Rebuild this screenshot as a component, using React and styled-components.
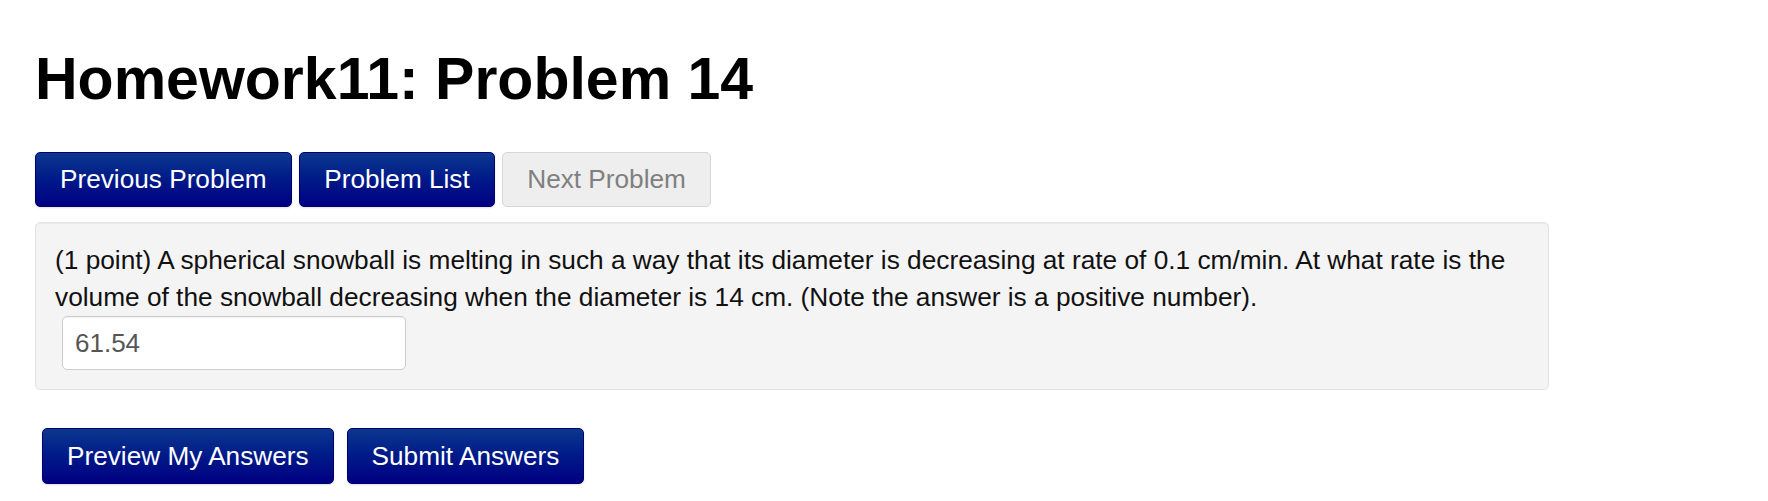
import React from 'react'
import styled, { createGlobalStyle } from 'styled-components'

const GlobalStyle = createGlobalStyle`
  html, body {
    margin: 0;
    padding: 0;
    background: #fff;
  }
  body {
    font-family: "Liberation Sans", Arial, sans-serif;
    color: #000;
  }
`

const Page = styled.div`
  padding: 47px 35px 16px 35px;
`

const Title = styled.h1`
  margin: 0;
  font-size: 59px;
  line-height: 64px;
  font-weight: bold;
  color: #000;
`

const NavRow = styled.div`
  display: flex;
  gap: 7.5px;
  margin-top: 41px;
`

const Button = styled.button`
  box-sizing: border-box;
  height: ${(p) => (p.$tall ? '56px' : '55px')};
  padding: 0 24px;
  font-family: "Liberation Sans", Arial, sans-serif;
  font-size: 26.2px;
  line-height: 1;
  border-radius: 5px;
  cursor: pointer;
  color: #fff;
  border: 1px solid #00006e;
  background: linear-gradient(to bottom, #0c388e 0%, #001c89 45%, #000082 100%);
  box-shadow: 0 1px 2px rgba(0, 0, 0, 0.12);

  &:disabled {
    cursor: default;
    color: #808080;
    border-color: #d6d6d6;
    background: #eeeeee;
    box-shadow: none;
  }
`

const Well = styled.div`
  box-sizing: border-box;
  width: 1514px;
  margin-top: 15px;
  padding: 19px;
  background: #f4f4f4;
  border: 1px solid #e3e3e3;
  border-radius: 5px;
  box-shadow: inset 0 1px 1px rgba(0, 0, 0, 0.04);
`

const ProblemText = styled.p`
  margin: 0;
  font-size: 26.25px;
  line-height: 37px;
  color: #111;
`

const AnswerInput = styled.input`
  display: block;
  box-sizing: border-box;
  width: 344px;
  height: 54px;
  margin: 0 0 0 7px;
  padding: 0 12px;
  font-family: "Liberation Sans", Arial, sans-serif;
  font-size: 26px;
  color: #555;
  background: #fff;
  border: 1px solid #cccccc;
  border-radius: 5px;
  box-shadow: inset 0 1px 1px rgba(0, 0, 0, 0.06);
  outline: none;
`

const SubmitRow = styled.div`
  display: flex;
  gap: 13px;
  margin: 38px 0 0 7px;
`

export default function App() {
  return (
    <>
      <GlobalStyle />
      <Page>
        <Title>Homework11: Problem 14</Title>
        <NavRow>
          <Button>Previous Problem</Button>
          <Button>Problem List</Button>
          <Button disabled>Next Problem</Button>
        </NavRow>
        <Well>
          <ProblemText>
            (1 point) A spherical snowball is melting in such a way that its diameter is decreasing at rate of 0.1 cm/min. At what rate is the volume of the snowball decreasing when the diameter is 14 cm. (Note the answer is a positive number).
          </ProblemText>
          <AnswerInput type="text" defaultValue="61.54" />
        </Well>
        <SubmitRow>
          <Button $tall>Preview My Answers</Button>
          <Button $tall>Submit Answers</Button>
        </SubmitRow>
      </Page>
    </>
  )
}
